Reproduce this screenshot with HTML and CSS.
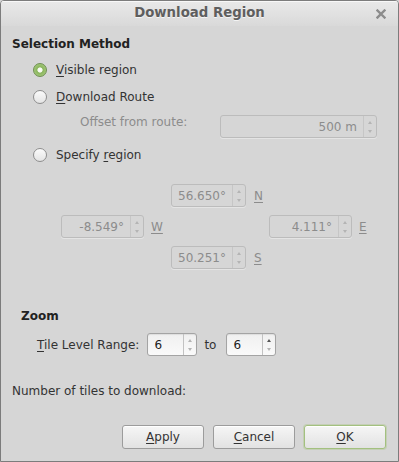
FILE: index.html
```html
<!DOCTYPE html>
<html lang="en">
<head>
    <meta charset="UTF-8">
    <meta name="viewport" content="width=device-width, initial-scale=1.0">
    <title>Download Region</title>
    <link rel="stylesheet" href="styles.css">
</head>
<body>
    <div class="window">
        <div class="titlebar">
            <span class="title">Download Region</span>
            <svg class="close" width="10" height="10" viewBox="0 0 10 10">
                <path d="M1.5 1.5 L8.5 8.5 M8.5 1.5 L1.5 8.5" stroke="#8c8c8c" stroke-width="2.4" stroke-linecap="square"/>
            </svg>
        </div>
        <div class="content">
            <div class="section-title">Selection Method</div>

            <div class="radio-row checked">
                <span class="radio"></span>
                <span class="label"><u>V</u>isible region</span>
            </div>
            <div class="radio-row">
                <span class="radio"></span>
                <span class="label"><u>D</u>ownload Route</span>
            </div>
            <div class="offset-row">
                <span class="dim-label">Offset from route:</span>
                <div class="spin disabled offset-spin">
                    <span class="spin-value">500 m</span>
                    <span class="spin-arrows"><i class="up"></i><i class="down"></i></span>
                </div>
            </div>
            <div class="radio-row">
                <span class="radio"></span>
                <span class="label">Specify <u>r</u>egion</span>
            </div>

            <div class="compass">
                <div class="coord north">
                    <div class="spin disabled narrow">
                        <span class="spin-value">56.650°</span>
                        <span class="spin-arrows"><i class="up"></i><i class="down"></i></span>
                    </div>
                    <span class="dim-label"><u>N</u></span>
                </div>
                <div class="coord west">
                    <div class="spin disabled">
                        <span class="spin-value">-8.549°</span>
                        <span class="spin-arrows"><i class="up"></i><i class="down"></i></span>
                    </div>
                    <span class="dim-label"><u>W</u></span>
                </div>
                <div class="coord east">
                    <div class="spin disabled">
                        <span class="spin-value">4.111°</span>
                        <span class="spin-arrows"><i class="up"></i><i class="down"></i></span>
                    </div>
                    <span class="dim-label"><u>E</u></span>
                </div>
                <div class="coord south">
                    <div class="spin disabled narrow">
                        <span class="spin-value">50.251°</span>
                        <span class="spin-arrows"><i class="up"></i><i class="down"></i></span>
                    </div>
                    <span class="dim-label"><u>S</u></span>
                </div>
            </div>

            <div class="section-title zoom-title">Zoom</div>
            <div class="range-row">
                <span class="label"><u>T</u>ile Level Range:</span>
                <div class="spin small">
                    <span class="spin-value">6</span>
                    <span class="spin-arrows"><i class="up"></i><i class="down"></i></span>
                </div>
                <span class="label to">to</span>
                <div class="spin small">
                    <span class="spin-value">6</span>
                    <span class="spin-arrows"><i class="up active"></i><i class="down"></i></span>
                </div>
            </div>

            <div class="tiles">Number of tiles to download:</div>

            <div class="buttons">
                <button class="btn"><u>A</u>pply</button>
                <button class="btn"><u>C</u>ancel</button>
                <button class="btn default"><u>O</u>K</button>
            </div>
        </div>
    </div>
</body>
</html>
```

FILE: styles.css
```css
body {
  margin: 0;
  padding: 0;
  font-family: "DejaVu Sans", sans-serif;
  font-size: 12px;
  line-height: 14px;
  color: #333;
  background-color: #d6d6d6;
}

u {
  text-decoration: underline;
  text-underline-offset: 2px;
}

.window {
  box-sizing: border-box;
  width: 399px;
  height: 462px;
  border: 1px solid #7c7c7c;
  border-radius: 4px 4px 0 0;
  background-color: #d6d6d6;
  overflow: hidden;
}

.titlebar {
  height: 25px;
  display: flex;
  align-items: center;
  justify-content: center;
  position: relative;
  background: linear-gradient(#e9e9e9, #d9d9d9);
  box-shadow: inset 0 1px 0 #f8f8f8;
}

.title {
  font-weight: bold;
  font-size: 13.3px;
  color: #5e5e5e;
  text-shadow: 0 1px 0 #f4f4f4;
  margin-top: -1px;
}

.close {
  position: absolute;
  right: 12px;
  top: 8px;
}

.content {
  padding: 0 12px 0 11px;
}

.section-title {
  font-weight: bold;
  color: #222;
  height: 16px;
  line-height: 16px;
  margin-top: 10px;
}

.radio-row {
  display: flex;
  align-items: center;
  height: 20px;
  margin-top: 7px;
  padding-left: 21px;
}

.section-title + .radio-row {
  margin-top: 8px;
}

.radio {
  box-sizing: border-box;
  width: 14px;
  height: 14px;
  border-radius: 50%;
  border: 1px solid #8e8e8e;
  background: linear-gradient(#fbfbfb, #e4e4e4);
  margin-right: 9px;
  flex-shrink: 0;
}

.radio-row.checked .radio {
  border-color: #6f8f52;
  background: radial-gradient(circle, #ffffff 0, #f4f8ee 2.2px, #89b45c 3px, #9ec473 5.5px);
}

.label {
  color: #333;
}

.dim-label {
  color: #8c8c8c;
}

.offset-row {
  display: flex;
  align-items: flex-start;
  margin-top: 8px;
  padding-left: 68px;
  height: 23px;
}

.offset-row .dim-label {
  flex: 1;
}

.spin {
  box-sizing: border-box;
  display: flex;
  height: 23px;
  border: 1px solid #a4a4a4;
  border-radius: 3px;
  background: linear-gradient(#f0f0f0, #fafafa);
  box-shadow: inset 0 1px 1px rgba(0, 0, 0, 0.08);
}

.spin.disabled {
  border-color: #bcbcbc;
  background: #d6d6d6;
  box-shadow: 0 1px 0 rgba(255, 255, 255, 0.35);
}

.spin-value {
  flex: 1;
  display: flex;
  align-items: center;
  justify-content: flex-end;
  padding: 0 6px;
}

.spin.disabled .spin-value {
  color: #8c8c8c;
}

.spin.small .spin-value {
  justify-content: flex-start;
  color: #222;
}

.spin-arrows {
  width: 12px;
  border-left: 1px solid #c2c2c2;
  display: flex;
  flex-direction: column;
  justify-content: space-between;
  align-items: center;
  padding: 5px 0 4px;
}

.spin.disabled .spin-arrows {
  border-left-color: #c6c6c6;
}

.spin-arrows i {
  width: 0;
  height: 0;
  border-left: 2.5px solid transparent;
  border-right: 2.5px solid transparent;
}

.spin-arrows .up {
  border-bottom: 3px solid #b4b4b4;
}

.spin-arrows .down {
  border-top: 3px solid #b4b4b4;
}

.spin-arrows .up.active {
  border-bottom-color: #555;
}

.offset-spin {
  width: 157px;
  margin-right: 9px;
}

.compass {
  display: grid;
  grid-template-columns: 110px 98px auto;
  grid-template-rows: repeat(3, 23px);
  row-gap: 8px;
  margin-top: 19px;
  margin-left: 49px;
}

.coord {
  display: flex;
  align-items: center;
}

.coord .spin {
  width: 83px;
}

.coord .spin.narrow {
  width: 75px;
}

.coord .dim-label {
  margin-left: 7px;
}

.coord.north,
.coord.south {
  grid-column: 2;
}

.coord.north .dim-label,
.coord.south .dim-label {
  margin-left: 8px;
}

.coord.north {
  grid-row: 1;
}

.coord.west {
  grid-row: 2;
  grid-column: 1;
}

.coord.east {
  grid-row: 2;
  grid-column: 3;
}

.coord.south {
  grid-row: 3;
}

.zoom-title {
  margin-top: 39px;
  padding-left: 9px;
}

.range-row {
  display: flex;
  align-items: center;
  margin-top: 9px;
  padding-left: 25px;
  height: 23px;
}

.range-row .label {
  margin-right: 8px;
}

.range-row .label.to {
  margin: 0 10px 0 7px;
}

.spin.small {
  width: 50px;
}

.tiles {
  margin-top: 28px;
  color: #333;
}

.buttons {
  display: flex;
  justify-content: flex-end;
  gap: 9px;
  margin-top: 27px;
}

.btn {
  box-sizing: border-box;
  width: 82px;
  height: 24px;
  padding: 0;
  font-family: "DejaVu Sans", sans-serif;
  font-size: 12px;
  color: #333;
  border: 1px solid #9c9c9c;
  border-radius: 3px;
  background: linear-gradient(#f6f6f6, #e2e2e2);
  box-shadow: inset 0 1px 0 #fff;
}

.btn.default {
  border-color: #a3c07f;
  box-shadow: inset 0 1px 0 #fff, 0 0 0 1px rgba(164, 196, 124, 0.35);
}
```
